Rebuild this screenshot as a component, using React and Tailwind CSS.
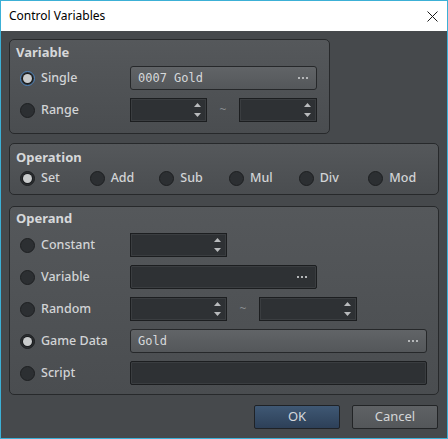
import React from "react";

const sans = "font-['Noto_Sans',_'Open_Sans',_sans-serif]";
const mono = "font-['DejaVu_Sans_Mono',_'Liberation_Mono',_monospace]";

const Radio = ({ checked, focus, label }) => (
  <div className="flex items-center gap-[6px]">
    <span
      className={`flex items-center justify-center w-[15px] h-[15px] rounded-full bg-[#2c2f32] border ${
        focus ? "border-[#4f86c0]" : "border-[#1d1f21]"
      }`}
    >
      {checked && (
        <span className="w-[9px] h-[9px] rounded-full bg-[#c9cbcc] ring-1 ring-[#1a1c1e]" />
      )}
    </span>
    <span className="text-[12.5px] font-medium text-[#d2d4d6] leading-none">{label}</span>
  </div>
);

const Dots = () => (
  <span className="ml-auto flex gap-[2px] pr-[1px]">
    <span className="w-[2px] h-[2px] bg-[#b5b7b9]" />
    <span className="w-[2px] h-[2px] bg-[#b5b7b9]" />
    <span className="w-[2px] h-[2px] bg-[#b5b7b9]" />
  </span>
);

const LightField = ({ text, w }) => (
  <div
    className={`${w} h-[24px] flex items-center px-[7px] rounded-[3px] border border-[#26282a] bg-gradient-to-b from-[#616467] to-[#54575a]`}
  >
    <span className={`${mono} text-[12px] text-[#d6d8da]`}>{text}</span>
    <Dots />
  </div>
);

const DarkField = ({ w, dots }) => (
  <div
    className={`${w} h-[24px] flex items-center px-[8px] rounded-[2px] border border-[#1c1e20] bg-[#2e3134] shadow-[inset_0_0_0_1px_#3a3d40]`}
  >
    {dots && <Dots />}
  </div>
);

const Spin = ({ w }) => (
  <div
    className={`${w} h-[24px] flex items-center justify-end pr-[4px] border border-[#1c1e20] bg-[#2e3134] shadow-[inset_0_0_0_1px_#3a3d40]`}
  >
    <svg width="9" height="16" viewBox="0 0 9 16">
      <path d="M4.5 1 L8 5 L1 5 Z" fill="#b9bbbd" />
      <path d="M1 11 L8 11 L4.5 15 Z" fill="#b9bbbd" />
    </svg>
  </div>
);

const Tilde = ({ w }) => (
  <span className={`${w} text-center text-[12px] text-[#8a8d90]`}>~</span>
);

const Group = ({ title, className, children }) => (
  <div
    className={`${className} rounded-[5px] border border-[#27292b] bg-gradient-to-b from-[#55585b] to-[#4a4d50]`}
  >
    <div className="h-[16px] pl-[6px] flex items-center text-[13px] font-bold text-[#d6d8da]">
      {title}
    </div>
    {children}
  </div>
);

const Row = ({ children }) => <div className="h-[24px] flex items-center pl-[10px]">{children}</div>;

const Lab = ({ children }) => <div className="w-[110px]">{children}</div>;

export default function App() {
  return (
    <div className={`${sans} w-[448px] h-[439px] flex flex-col border border-[#3cb0d6] bg-white`}>
      {/* title bar */}
      <div className="h-[30px] flex items-center justify-between pl-[8px] pr-[9px] bg-white">
        <span className="text-[12px] text-black">Control Variables</span>
        <svg width="11" height="11" viewBox="0 0 11 11">
          <path d="M0.5 0.5 L10.5 10.5 M10.5 0.5 L0.5 10.5" stroke="#1a1a1a" strokeWidth="1" />
        </svg>
      </div>

      {/* body */}
      <div className="flex-1 flex flex-col px-[8px] pt-[8px] bg-[#46494c]">
        <Group title="Variable" className="w-[321px] h-[95px] pt-[5px]">
          <div className="mt-[5px] flex flex-col gap-[8px]">
            <Row>
              <Lab>
                <Radio checked focus label="Single" />
              </Lab>
              <LightField text="0007 Gold" w="w-[187px]" />
            </Row>
            <Row>
              <Lab>
                <Radio label="Range" />
              </Lab>
              <Spin w="w-[77px]" />
              <Tilde w="w-[32px]" />
              <Spin w="w-[78px]" />
            </Row>
          </div>
        </Group>

        <Group title="Operation" className="mt-[9px] h-[52px] pt-[6px]">
          <div className="mt-[4px] h-[16px] flex items-center pl-[10px]">
            {["Set", "Add", "Sub", "Mul", "Div", "Mod"].map((op, i) => (
              <div key={op} className="w-[70px]">
                <Radio checked={i === 0} label={op} />
              </div>
            ))}
          </div>
        </Group>

        <Group title="Operand" className="mt-[11px] h-[189px] pt-[4px]">
          <div className="mt-[6px] flex flex-col gap-[8px]">
            <Row>
              <Lab>
                <Radio label="Constant" />
              </Lab>
              <Spin w="w-[97px]" />
            </Row>
            <Row>
              <Lab>
                <Radio label="Variable" />
              </Lab>
              <DarkField w="w-[187px]" dots />
            </Row>
            <Row>
              <Lab>
                <Radio label="Random" />
              </Lab>
              <Spin w="w-[97px]" />
              <Tilde w="w-[32px]" />
              <Spin w="w-[98px]" />
            </Row>
            <Row>
              <Lab>
                <Radio checked label="Game Data" />
              </Lab>
              <LightField text="Gold" w="w-[297px]" />
            </Row>
            <Row>
              <Lab>
                <Radio label="Script" />
              </Lab>
              <DarkField w="w-[297px]" />
            </Row>
          </div>
        </Group>

        <div className="mt-[10px] flex justify-end gap-[12px] pr-[1px]">
          <button className="w-[86px] h-[24px] rounded-[2px] border border-[#1f2226] bg-gradient-to-b from-[#3f5874] to-[#2d4058] text-[13px] text-[#d4d8dc]">
            OK
          </button>
          <button className="w-[86px] h-[24px] rounded-[2px] border border-[#222426] bg-gradient-to-b from-[#5f6265] to-[#54575a] text-[13px] text-[#d4d6d8]">
            Cancel
          </button>
        </div>
      </div>
    </div>
  );
}
